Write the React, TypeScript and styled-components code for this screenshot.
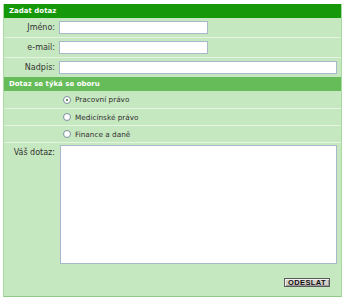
import styled, { createGlobalStyle } from "styled-components"

const GlobalStyle = createGlobalStyle`
  body {
    margin: 0;
    background: #ffffff;
    font-family: "DejaVu Sans", Verdana, sans-serif;
  }
`

const Page = styled.div`
  padding: 4px 0 0 3px;
`

const Panel = styled.form`
  width: 337px;
  background: #c6e8c0;
  border-left: 1px solid #a8d9a0;
  border-right: 1px solid #a8d9a0;
  border-bottom: 1px solid #8fcb86;
`

interface BarProps {
  light?: boolean
}

const Bar = styled.div<BarProps>`
  height: 14px;
  line-height: 14px;
  padding-left: 5px;
  background: ${({ light }) => (light ? "#66bc58" : "#15990a")};
  color: #ffffff;
  font-size: 7px;
  font-weight: bold;
`

interface RowProps {
  height: number
}

const Row = styled.div<RowProps>`
  display: grid;
  grid-template-columns: 55px 1fr;
  align-items: center;
  height: ${({ height }) => height}px;
  border-top: 1px solid #e4f4e1;
  &:first-of-type {
    border-top: none;
  }
`

const Label = styled.label`
  text-align: right;
  padding-right: 4px;
  font-size: 8px;
  color: #333333;
`

interface FieldProps {
  width: number
}

const Field = styled.input<FieldProps>`
  box-sizing: border-box;
  width: ${({ width }) => width}px;
  height: 13px;
  margin: 0;
  padding: 0 2px;
  border: 1px solid #a7b9c8;
  background: #ffffff;
  outline: none;
`

const RadioLabel = styled.label`
  display: flex;
  align-items: center;
  gap: 4px;
  padding-left: 4px;
  font-size: 7.3px;
  color: #333333;
`

const RadioDot = styled.span<{ checked?: boolean }>`
  box-sizing: border-box;
  width: 8px;
  height: 8px;
  border-radius: 50%;
  border: 1px solid #7d8e9c;
  background: #ffffff;
  display: flex;
  align-items: center;
  justify-content: center;
  &::after {
    content: "";
    width: 2px;
    height: 2px;
    border-radius: 50%;
    background: ${({ checked }) => (checked ? "#2b7a2b" : "transparent")};
  }
`

const MessageRow = styled.div`
  display: grid;
  grid-template-columns: 55px 1fr;
  border-top: 1px solid #e4f4e1;
  padding-top: 2px;
`

const TopLabel = styled(Label)`
  padding-top: 3px;
`

const MessageArea = styled.div`
  display: flex;
  flex-direction: column;
  align-items: flex-end;
  padding-right: 5px;
`

const TextBox = styled.textarea`
  box-sizing: border-box;
  width: 277px;
  height: 119px;
  margin: 0 -1px 0 0;
  border: 1px solid #a7b9c8;
  background: #ffffff;
  resize: none;
  outline: none;
`

const Submit = styled.button`
  box-sizing: border-box;
  width: 46px;
  height: 9px;
  margin: 14px 6px 9px 0;
  padding: 0;
  border: 1px solid #5a5a5a;
  box-shadow: inset 1px 1px 0 #f2f2f2, inset -1px -1px 0 #9a9a9a;
  background: #d4d0c8;
  font-family: "Liberation Sans", Arial, sans-serif;
  font-size: 7.5px;
  font-weight: bold;
  line-height: 7px;
  color: #111111;
  letter-spacing: 0.4px;
`

const fields = [
  { label: "Jméno:", width: 149 },
  { label: "e-mail:", width: 149 },
  { label: "Nadpis:", width: 278 },
]

const topics = [
  { label: "Pracovní právo", checked: true, height: 17 },
  { label: "Medicínské právo", checked: false, height: 16 },
  { label: "Finance a daně", checked: false, height: 16 },
]

export default function App() {
  return (
    <Page>
      <GlobalStyle />
      <Panel onSubmit={(e) => e.preventDefault()}>
        <Bar>Zadat dotaz</Bar>
        <div>
          {fields.map((f) => (
            <Row key={f.label} height={19}>
              <Label>{f.label}</Label>
              <Field type="text" width={f.width} />
            </Row>
          ))}
        </div>
        <Bar light>Dotaz se týká se oboru</Bar>
        <div>
          {topics.map((t) => (
            <Row key={t.label} height={t.height}>
              <span />
              <RadioLabel>
                <RadioDot checked={t.checked} />
                {t.label}
              </RadioLabel>
            </Row>
          ))}
        </div>
        <MessageRow>
          <TopLabel>Váš dotaz:</TopLabel>
          <MessageArea>
            <TextBox />
            <Submit type="submit">ODESLAT</Submit>
          </MessageArea>
        </MessageRow>
      </Panel>
    </Page>
  )
}
